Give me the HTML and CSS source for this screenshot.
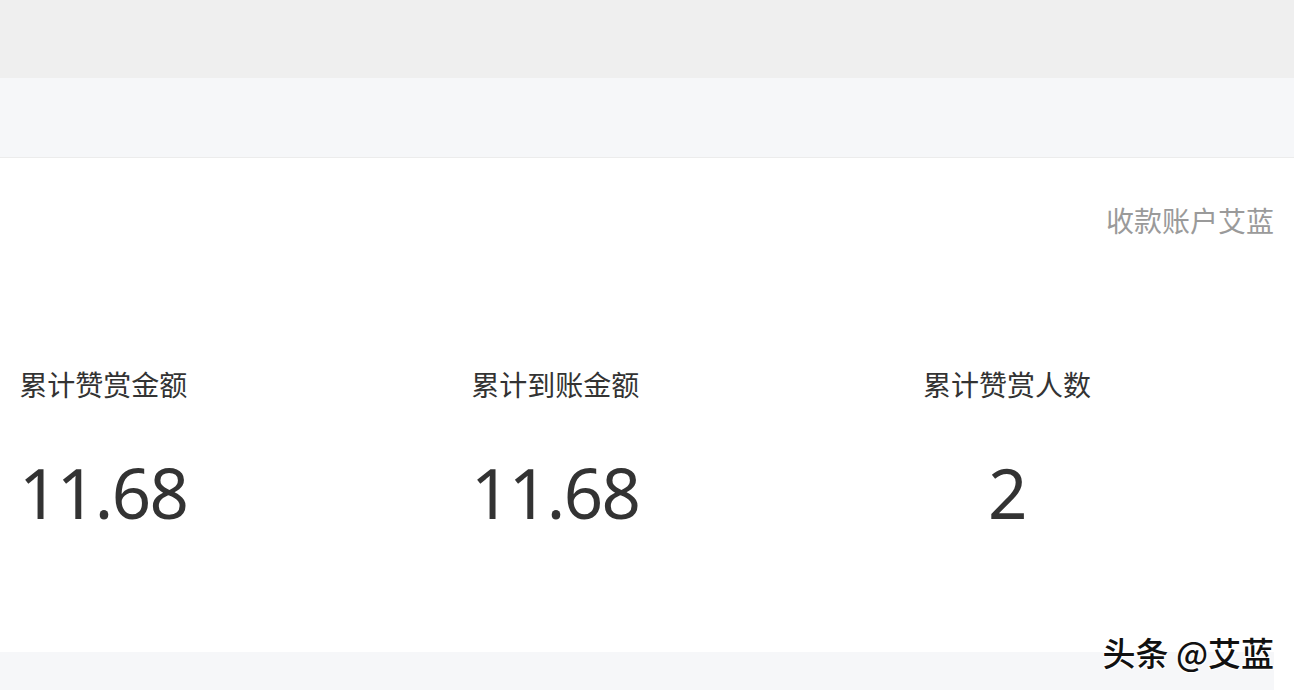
FILE: index.html
```html
<!DOCTYPE html>
<html lang="zh">
<head>
<meta charset="utf-8">
<title>赞赏统计</title>
<link rel="stylesheet" href="styles.css">
</head>
<body>
<div class="topbar"></div>
<div class="subbar"></div>
<main class="panel">
  <div class="account">收款账户艾蓝</div>
  <div class="stats">
    <div class="stat">
      <div class="label">累计赞赏金额</div>
      <div class="value">11.68</div>
    </div>
    <div class="stat">
      <div class="label">累计到账金额</div>
      <div class="value">11.68</div>
    </div>
    <div class="stat">
      <div class="label">累计赞赏人数</div>
      <div class="value">2</div>
    </div>
  </div>
</main>
<div class="footer">
  <div class="strip"></div>
  <div class="watermark">头条 @艾蓝</div>
</div>
</body>
</html>
```

FILE: styles.css
```css
html, body {
  margin: 0;
  padding: 0;
  background: #ffffff;
  font-family: "Noto Sans", "Noto Sans CJK SC", sans-serif;
  overflow: hidden;
}
.topbar {
  height: 78px;
  background: #efefef;
}
.subbar {
  height: 79px;
  background: #f6f7f9;
  border-bottom: 1px solid #ececec;
}
.panel {
  height: 494px;
  background: #ffffff;
  box-sizing: border-box;
  padding: 0 20px 0 19px;
  display: flex;
  flex-direction: column;
}
.account {
  margin-top: 42px;
  align-self: flex-end;
  font-size: 28px;
  line-height: 40px;
  color: #9a9a9a;
  font-family: "Noto Sans CJK SC", sans-serif;
}
.stats {
  margin-top: 124px;
  display: grid;
  grid-template-columns: 452px 452px 452px;
}
.stat {
  justify-self: start;
  display: flex;
  flex-direction: column;
  align-items: center;
}
.label {
  font-family: "Noto Sans CJK SC", sans-serif;
  font-size: 28px;
  line-height: 40px;
  color: #333333;
}
.value {
  margin-top: 50px;
  font-family: "Noto Sans", sans-serif;
  font-size: 69px;
  line-height: 76px;
  letter-spacing: -1.6px;
  color: #333333;
}
.footer {
  height: 38px;
  position: relative;
}
.strip {
  width: 1274px;
  height: 38px;
  background: #f6f7f9;
}
.watermark {
  position: absolute;
  right: 20px;
  top: -20px;
  font-family: "Noto Sans CJK SC", sans-serif;
  font-size: 33px;
  font-weight: 500;
  line-height: 40px;
  color: #111111;
  text-shadow: 1px 1px 0 #fff, -1px -1px 0 #fff, 1px -1px 0 #fff, -1px 1px 0 #fff;
}
```
